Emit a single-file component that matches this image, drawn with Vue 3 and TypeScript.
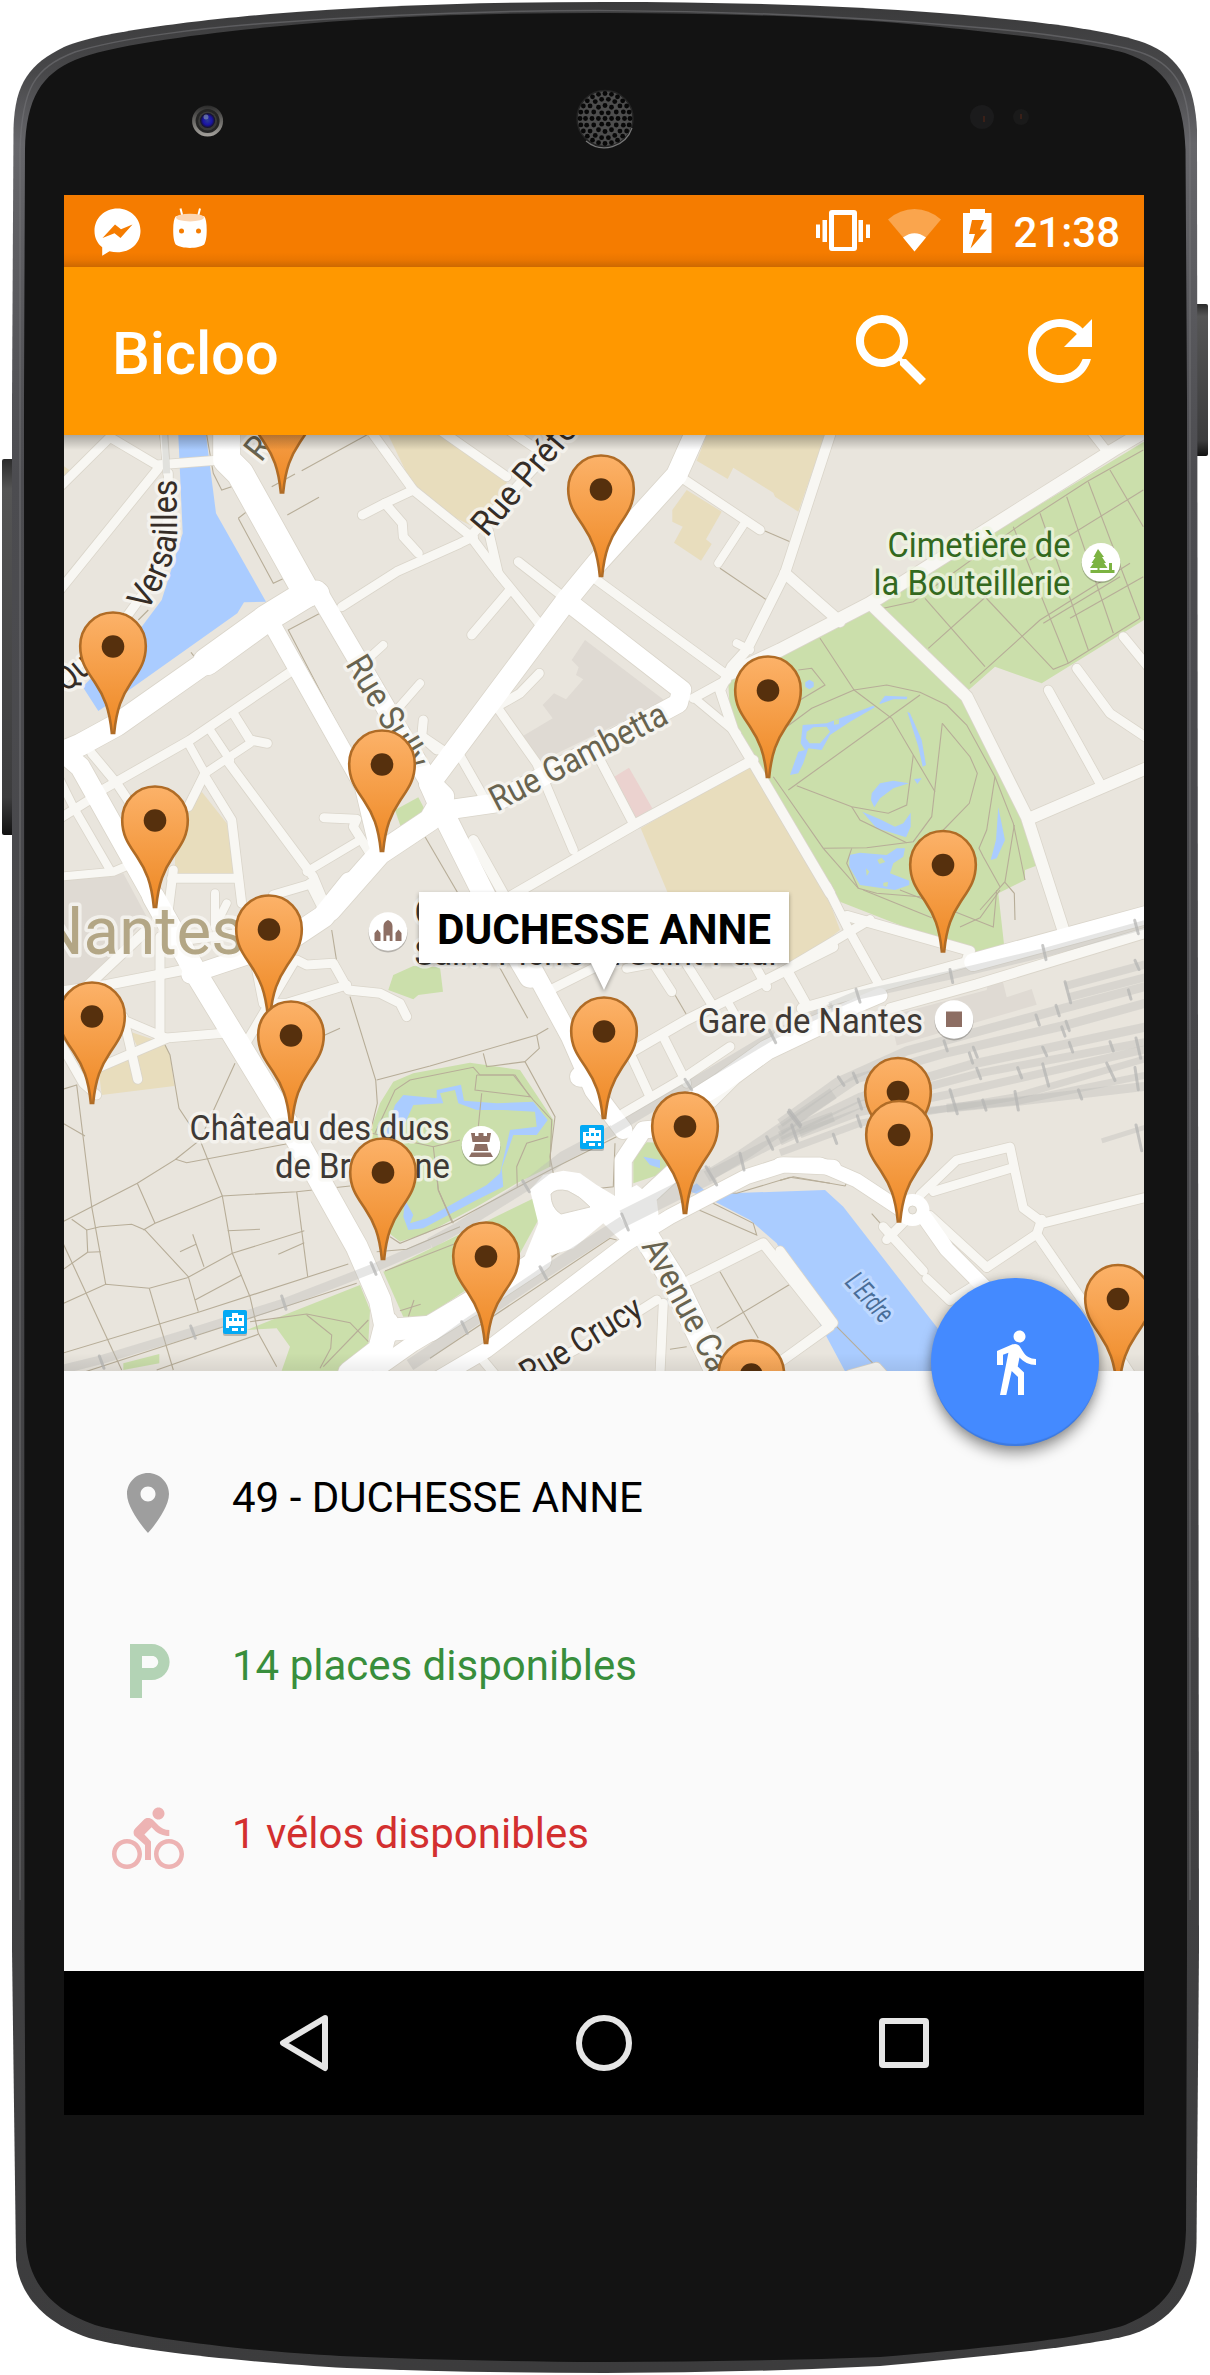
<script setup lang="ts">
type Tile = 'a' | 'b' | 'c' | 'd' | 'e' | 'f'
type Shape = [Tile, string, number?]

// Origin and vertical density of each map tile
const tiles: Record<Tile, [number, number, number]> = {
  a: [60, 430, 3],
  b: [430, 430, 3],
  c: [780, 430, 3],
  d: [60, 890, 3],
  e: [430, 890, 3],
  f: [780, 890, 2.703],
}

const project = (tile: Tile, points: string): string => {
  const [ox, oy, sy] = tiles[tile]
  return points
    .trim()
    .split(/\s+/)
    .map((p) => {
      const [x, y] = p.split(',').map(Number)
      return `${(ox + x / 3).toFixed(1)},${(oy + y / sy).toFixed(1)}`
    })
    .join(' ')
}
const build = (list: Shape[], width: number) =>
  list.map(([t, p, w]) => ({ points: project(t, p), w: w ?? width }))

const sand = build([
  ['a', '985,15 1140,15 1350,140 1260,300 1180,260 1060,170'],
  ['a', '0,100 35,125 0,165'],
  ['a', '425,1085 500,1180 525,1330 345,1332 345,1250 385,1150'],
  ['b', '830,15 1185,15 1105,245 1035,200 1030,188 910,113 893,147 800,92'],
  ['b', '770,180 875,245 828,328 845,342 813,392 732,338 758,290 727,275 727,240'],
  ['b', '632,1195 960,1005 1200,1420 1230,1500 1100,1600 760,1500'],
  ['d', '210,425 315,460 330,495 343,588 125,615 115,530 240,485'],
], 0)

const grey = build([
  ['b', '465,630 705,812 320,1000 275,920 368,865 338,825 372,790 408,808 460,748 438,735 446,712 425,690'],
  ['a', '0,1350 190,1330 260,1460 100,1650 0,1680'],
  ['f', '330,340 620,270 625,245 665,235 680,290 755,268 770,310 350,420'],
], 0)

const green = build([
  ['c', '265,530 0,675 -100,700 -155,760 -150,850 -110,930 150,1370 180,1415 575,1570 672,1543 655,1390 735,1350 735,1320 775,1305 740,1180 560,810'],
  ['c', '290,520 1092,35 1092,570 785,760 645,710 560,785'],
  ['a', '1005,1140 1075,1102 1095,1140 1022,1190'],
  ['d', '985,300 1000,255 1060,228 1140,232 1149,305 1075,315 1060,328'],
  ['d', '925,740 960,640 1000,575 1060,550 1230,518 1380,540 1480,690 1470,830 1370,880 1250,950 1100,1030 1020,1055 975,1020 1040,930 960,900'],
  ['d', '560,1320 900,1185 930,1260 925,1360 840,1442 665,1442 690,1370 650,1315'],
  ['d', '970,1145 1430,920 1440,980 1380,1090 1100,1280 1030,1280'],
  ['d', '190,1420 298,1392 298,1420 190,1440'],
  ['d', '1010,1385 1130,1340 1030,1410 970,1442'],
  ['e', '610,880 610,800 650,757 690,758 740,800 700,850'],
], 0)

const water = build([
  ['a', '355,15 438,15 468,250 618,515 552,517 532,550 200,785 115,843 68,770 245,590 305,510 368,310'],
  ['c', '30,1035 55,965 75,960 62,940 68,885 140,880 280,827 285,832 210,875 150,915 125,960 85,955 70,1000 55,1030'],
  ['c', '298,820 315,797 382,800 380,808 340,808 300,822'],
  ['c', '382,845 390,850 425,930 438,1005 428,1010 415,950'],
  ['c', '275,1090 300,1060 340,1052 387,1060 340,1075 300,1105 283,1132 273,1110'],
  ['c', '402,1047 425,1045 412,1062'],
  ['c', '247,1145 300,1168 345,1190 370,1180 392,1148 392,1190 378,1222 340,1210 290,1195'],
  ['c', '208,1275 240,1268 320,1275 350,1255 375,1255 370,1280 340,1300 330,1330 388,1352 388,1365 345,1380 240,1365 208,1310'],
  ['c', '655,1132 675,1230 650,1285 632,1290 648,1230'],
  ['c', '76,757 88,749 101,757 101,770 88,778 76,770'],
  ['d', '975,735 1005,645 1030,615 1130,625 1130,600 1203,584 1212,632 1310,640 1420,635 1463,690 1430,735 1360,735 1325,835 1330,890 1250,930 1090,1015 1045,1020 1030,980 1035,930 1060,975 1050,1000 1100,985 1280,885 1320,850 1350,720 1430,710 1425,665 1330,660 1250,660 1195,640 1185,600 1140,610 1150,640 1060,645 1035,700 1020,740'],
  ['e', '640,800 690,810 690,835 660,825'],
  ['e', '800,880 845,920 900,910 1185,900 1240,950 1620,1440 1275,1500 1040,1060 960,990 845,930 770,900'],
], 0)

// Small islands and clearings inside the ponds
const islands = build([
  ['c', '80,905 100,892 140,890 150,905 120,940 88,940 78,925'],
  ['c', '162,870 178,868 176,882 162,884'],
  ['c', '292,1290 305,1283 316,1296 298,1302'],
  ['c', '258,1315 268,1325 260,1338'],
  ['c', '310,1358 324,1356 322,1370 310,1368'],
], 0)

const buildings = build([['b', '553,1040 597,1013 667,1135 617,1165']], 0)

const minor = build([
  ['a', '-20,190 150,22 290,105 480,90'],
  ['a', '0,480 295,115'],
  ['a', '310,0 320,130', 7],
  ['a', '325,130 325,260 280,450 200,560 0,760', 9],
  ['a', '930,0 1060,180 1240,325'],
  ['a', '907,255 975,220 1060,180'],
  ['a', '975,220 1027,280 1030,320 1075,370'],
  ['a', '845,530 1010,425 1200,340 1240,320'],
  ['a', '1140,0 1340,140'],
  ['b', '120,320 420,0'],
  ['b', '235,0 310,50'],
  ['b', '130,330 205,430 335,590'],
  ['b', '175,300 205,430'],
  ['b', '240,480 125,615', 9],
  ['b', '265,395 400,500', 9],
  ['b', '500,450 890,735'],
  ['b', '1205,0 1065,430 950,660 905,710 870,780 910,900 970,1000 1200,1390', 10],
  ['f', '140,-10 210,115 300,260', 9],
  ['b', '790,805 890,750'],
  ['b', '800,810 920,910', 8],
  ['c', '15,430 180,575', 11],
  ['c', '-150,730 0,660 270,520 1000,60 1110,-5', 13],
  ['c', '270,520 560,800 740,1160 850,1500', 12],
  ['c', '750,1165 1110,1010', 12],
  ['c', '805,780 960,1060', 9],
  ['c', '890,715 990,850 1110,930', 9],
  ['c', '1030,620 1120,730', 9],
  ['c', '930,0 985,70'],
  ['b', '765,150 990,300', 9],
  ['b', '940,285 865,400', 8],
  ['b', '920,640 960,660', 8],
  ['b', '328,730 270,790 200,830'],
  ['b', '200,830 320,1000 430,1260'],
  ['b', '80,960 160,1100'],
  ['b', '970,990 620,1180 430,1290 240,1400', 10],
  ['b', '505,980 610,1180'],
  ['b', '130,1230 230,1410', 10],
  ['b', '-20,920 40,960', 8],
  ['a', '1090,870 1085,920 1130,960', 9],
  ['a', '100,1095 390,930 700,720'],
  ['a', '520,850 570,930 622,940', 9],
  ['a', '385,940 435,1030 570,940', 8],
  ['a', '450,900 510,990', 8],
  ['a', '435,1030 385,1130'],
  ['a', '435,1040 515,1170 545,1420', 9],
  ['a', '500,990 760,1340 810,1460'],
  ['a', '740,1325 900,1230', 8],
  ['a', '792,1163 890,1168 880,1190 930,1270', 9],
  ['a', '335,1345 530,1345'],
  ['a', '325,1440 340,1320'],
  ['a', '95,970 170,1060 230,1150'],
  ['a', '0,1340 160,1325 220,1300', 8],
  ['a', '0,1050 40,1130 150,1320', 8],
  ['a', '0,1165 40,1140 120,1090'],
  ['a', '640,1395 760,1360'],
  ['a', '970,645 920,690', 8],
  ['a', '1080,760 1010,840', 8],
  ['d', '0,305 140,285 420,230', 10],
  ['d', '300,140 300,440'],
  ['d', '310,445 490,430'],
  ['d', '110,535 320,445 190,390', 9],
  ['d', '190,380 233,568', 9],
  ['d', '-10,440 70,580 110,615'],
  ['d', '560,455 700,220'],
  ['d', '590,240 610,340 680,340 860,285', 9],
  ['d', '710,210 740,225 820,220 865,300 960,310 1020,340 1040,380', 9],
  ['d', '80,290 250,130', 10],
  ['d', '465,10 465,110 500,40', 8],
  ['d', '380,150 540,130'],
  ['d', '750,-20 800,80'],
  ['e', '360,300 640,160'],
  ['e', '590,235 670,220 725,305', 9],
  ['e', '765,215 850,350'],
  ['e', '580,500 770,390 1210,170', 10],
  ['e', '600,490 660,620'],
  ['e', '700,440 770,580'],
  ['e', '580,670 760,565 900,470'],
  ['e', '890,330 930,400', 8],
  ['e', '960,200 1010,290'],
  ['e', '1070,250 1130,350'],
  ['e', '850,640 920,570 1000,510', 7],
  ['f', '0,225 270,80'],
  ['f', '200,70 570,165 560,190', 10],
  ['f', '65,320 560,195', 10],
  ['f', '25,220 80,310'],
  ['f', '330,320 590,255 1100,115', 10],
  ['e', '780,1170 1000,1060 1190,1300', 10],
  ['e', '1200,1310 1060,1410'],
  ['e', '700,1240 690,1450', 9],
  ['e', '250,1480 490,1350 680,1230', 9],
  ['e', '150,1400 200,1460', 9],
  ['f', '420,825 530,730 690,695 705,760 730,860 790,900 1100,830'],
  ['f', '460,815 700,750', 9],
  ['f', '785,890 770,930 620,1020'],
  ['f', '770,930 900,1100 1060,1320'],
  ['f', '450,880 620,1020'],
  ['f', '310,910 430,1030', 9],
  ['f', '440,1050 510,1110 600,1060'],
  ['f', '0,975 160,1170 0,1275', 9],
  ['f', '320,945 380,890', 9],
  ['f', '210,1310 290,1290 330,1330', 9],
], 9)

const major = build([
  ['a', '500,-10 500,90 540,130 735,480 745,490', 27],
  ['a', '770,480 1110,1060', 19],
  ['a', '1110,1060 1150,1150 1310,1470 1410,1640', 22],
  ['e', '300,220 420,440 490,600 580,720', 18],
  ['a', '-50,990 60,945 170,885 440,695', 22],
  ['a', '440,695 620,565 745,488', 27],
  ['a', '745,488 775,490', 22],
  ['a', '640,590 910,1070 950,1240', 17],
  ['a', '0,960 60,1010 290,1420', 20],
  ['d', '280,20 420,270 700,730 890,1070 960,1230 980,1330', 22],
  ['b', '805,-10 740,135 500,400 410,510 0,1060', 21],
  ['a', '1110,1060 1150,1100 1110,1170 960,1270 810,1440', 22],
  ['d', '870,-20 790,80 700,140', 22],
  ['d', '660,165 390,255', 17],
  ['b', '420,520 755,780 745,820 300,1060 190,1120 50,1140 -20,1180', 19],
  ['d', '980,1320 1110,1310 1260,1220', 22],
  ['d', '980,1300 960,1380 870,1450', 24],
  ['d', '960,1430 1060,1360 1110,1330', 16],
  ['e', '0,1320 170,1215 330,1110', 23],
  ['e', '0,1480 170,1380 590,1060 720,980 950,860 1060,825 1210,832', 15],
  ['f', '0,742 120,742 230,785 390,880', 14],
  ['f', '430,880 500,970 620,1080 720,1180', 15],
  ['e', '630,1010 730,1170 870,1460', 25],
  ['e', '760,650 870,580 1010,480 1210,385', 20],
  ['f', '0,400 300,285', 15],
  ['f', '580,195 1110,65', 18],
  ['e', '580,950 580,810 640,720 740,710', 17],
  ['e', '640,930 770,810 830,680', 18],
  ['e', '450,560 470,560', 20],
], 20)

const blobs = build([
  ['e', '300,900 340,855 400,842 450,850 500,885 555,918 570,910 620,885 680,930 690,1010 600,1080 520,1000 430,1075 350,1100 280,1110 325,1000'],
], 0)

const footpaths = build([
  ['a', '535,265 570,237 682,440 640,460 535,265'],
  ['a', '440,15 460,130 485,180 530,165'],
  ['a', '635,170 705,132'],
  ['a', '725,122 920,15'], ['a', '682,255 777,202'],
  ['a', '780,550 685,600 945,1100'], ['a', '905,1155 950,1240'],
  ['a', '1095,1220 1200,1400'],
  ['a', '300,15 325,260'], ['a', '235,570 265,540'], ['a', '393,667 407,685'],
  ['b', '1005,303 1080,335'], ['b', '870,415 1010,510'],
  ['c', '120,625 222,780 95,835 20,890'],
  ['c', '222,780 320,765 420,787 500,825 560,885 645,1040 700,1180 735,1350'],
  ['c', '222,780 335,865 400,975 465,1085'], ['c', '420,795 25,1080'],
  ['c', '-20,1040 130,1255 235,1375 290,1390 420,1400'],
  ['c', '50,1067 215,1130 325,1150 380,1125 400,975'],
  ['c', '215,1130 240,1170 380,1238'], ['c', '130,1255 260,1253 400,1235 455,1160 487,880'],
  ['c', '487,880 570,980 592,1030 568,1120 490,1200'],
  ['c', '645,1040 620,1200 597,1255 610,1280 660,1370'],
  ['c', '703,1185 675,1355 600,1440'], ['c', '675,1357 703,1390 705,1470'],
  ['c', '55,720 95,715 135,765 60,810'],
  ['c', '215,1255 200,1300 235,1375'],
  ['f', '250,0 455,75'], ['f', '360,0 640,100 650,0'], ['f', '540,100 600,75 660,0'],
  ['c', '310,535 400,515 720,285 920,155 1090,60'],
  ['c', '435,505 615,710'], ['c', '445,655 640,480'], ['c', '610,495 820,718 865,700 1080,565'],
  ['c', '570,760 780,570 1050,400'], ['c', '700,290 865,700'], ['c', '780,250 925,660'],
  ['c', '860,200 1000,610'], ['c', '925,155 1080,565'], ['c', '990,120 1090,290'],
  ['c', '750,390 1090,180'], ['c', '790,580 1020,440'], ['c', '870,565 1090,440'],
  ['e', '205,225 293,385'], ['e', '735,315 770,375'],
  ['d', '815,120 830,215'], ['d', '870,320 947,570 952,640 930,730'],
  ['d', '525,520 420,750 347,808'], ['d', '795,435 840,415'],
  ['d', '315,465 330,495 357,655 420,750 487,918 517,1090 570,1220 595,1330 650,1430'],
  ['d', '0,600 50,585 95,950 137,1183'], ['d', '0,695 75,738'],
  ['d', '0,1000 95,950 232,880 347,808 380,818 690,760'],
  ['d', '35,988 80,1020 120,1010 215,1003 255,1020 385,1160 415,1265'],
  ['d', '80,1020 83,1087 122,1085'], ['d', '83,1087 0,1145'],
  ['d', '232,880 285,1000 487,918 710,905 870,888'], ['d', '285,1000 250,1020'],
  ['d', '710,905 743,1160'], ['d', '503,1022 600,1018'],
  ['d', '398,1033 432,1130'], ['d', '360,1085 408,1063'],
  ['d', '382,1163 517,1090 733,1022'], ['d', '655,1093 733,1058'], ['d', '405,1230 545,1155'],
  ['d', '0,1245 137,1183 268,1195 382,1163'], ['d', '0,1040 185,1440'], ['d', '268,1195 340,1440'],
  ['d', '0,1392 420,1265 865,1122'], ['d', '0,1470 230,1395 890,1180'],
  ['d', '290,1440 595,1333'], ['d', '570,1295 740,1272 870,1298 925,1355'],
  ['d', '740,1275 815,1335 812,1375 780,1435'], ['d', '925,1290 790,1430'],
  ['d', '1020,1262 1082,1243'], ['d', '1062,1230 1045,1280'],
  ['d', '950,570 1110,528 1430,435 1465,415'],
  ['d', '945,730 1005,600 1050,570 1240,532 1260,555 1360,555 1420,630 1475,690 1470,830'],
  ['d', '935,730 1120,770 1200,750'], ['d', '1120,770 1135,900 1175,995'],
  ['d', '990,1040 1020,1060 1180,995 1470,840 1680,735'],
  ['d', '950,1085 1040,1078 1200,1010'], ['d', '975,1143 1200,1055'],
  ['e', '160,490 170,530 285,515 375,680 360,800 370,850'],
  ['e', '140,555 135,600 300,620 255,555 140,555'], ['e', '155,610 145,710'],
  ['e', '355,740 290,760 260,830 262,890'], ['e', '320,435 328,475 285,515'],
  ['e', '20,850 25,900 70,1000'], ['e', '510,895 550,890 555,760'],
  ['e', '0,1405 540,1045 560,1050'], ['e', '0,1350 500,1010'],
  ['e', '845,905 920,910 1080,862 1200,880'], ['e', '795,955 980,1035 970,1000 840,935'],
  ['e', '870,1145 985,1345'], ['e', '860,1315 1085,1180 1060,1135'], ['e', '720,1378 770,1370'],
  ['f', '0,785 40,775 195,800 205,785'], ['f', '275,875 310,910'], ['f', '170,1180 290,1290'],
], 1)

const rails = build([
  ['d', '0,1440 120,1410 400,1325 670,1240 940,1135 1110,1060', 9],
  ['e', '0,1060 90,1010 290,885 400,800 550,720', 11],
  ['e', '550,720 770,590 1030,435 1210,350', 9],
  ['f', '150,315 230,285 510,230 790,170 1110,90', 9],
  ['a', '315,0 320,130', 7],
  ['e', '-60,1425 0,1385 110,1305 340,1150 580,995', 12],
  ['e', '580,985 850,850', 17],
  ['e', '830,860 930,800 1210,610', 12],
  ['e', '850,850 1100,720 1210,680', 10],
  ['f', '0,630 170,520 380,435 850,320 1100,260', 9],
  ['f', '0,650 230,510 500,440 860,365 1100,305', 9],
  ['f', '0,665 240,560 580,470 1100,370', 9],
  ['f', '0,680 240,580 600,495 1100,410', 8],
  ['f', '60,660 240,600 520,550 1100,430', 8],
  ['f', '0,710 240,630 700,560 1100,455', 7],
  ['f', '400,600 720,570 1100,500', 7],
  ['f', '500,590 720,570 1100,530', 9],
  ['f', '855,260 1100,200', 8], ['f', '865,290 1100,235', 8],
  ['f', '965,678 1100,640', 5],
], 8)

const ticks = build([
  ['d', '118,1398 132,1435'], ['d', '392,1308 406,1345'], ['d', '665,1218 678,1258'], ['d', '933,1118 948,1153'],
  ['e', '278,872 298,905'], ['e', '330,1130 350,1168'], ['e', '575,972 595,1020'], ['e', '95,1295 112,1330'],
  ['e', '1018,420 1037,458'], ['e', '765,568 785,600'], ['e', '828,830 860,885'], ['e', '1010,740 1028,778'],
  ['e', '1078,660 1112,705'], ['e', '930,790 942,840'],
  ['f', '228,268 240,303'], ['f', '510,215 518,250'], ['f', '788,150 798,188'], ['f', '1064,82 1075,118'],
  ['f', '855,248 872,305'], ['f', '1045,270 1053,295'], ['f', '768,338 778,365'], ['f', '828,312 838,340'],
  ['f', '845,370 855,395'], ['f', '858,355 868,380'], ['f', '492,408 502,435'], ['f', '568,440 578,468'], ['f', '580,425 592,452'],
  ['f', '788,425 800,448'], ['f', '868,412 878,438'], ['f', '990,410 1000,435'], ['f', '590,482 602,510'], ['f', '713,480 725,508'],
  ['f', '788,470 806,530'], ['f', '980,468 1005,515'], ['f', '510,540 532,605'], ['f', '608,568 618,595'], ['f', '705,545 715,595'],
  ['f', '895,540 905,565'], ['f', '1068,400 1082,455'], ['f', '1065,190 1077,215'], ['f', '1065,480 1075,540'],
  ['f', '175,505 192,528'], ['f', '220,495 232,520'], ['f', '25,600 60,640'], ['f', '235,565 245,592'], ['f', '160,660 170,685'],
  ['f', '1068,635 1085,705'], ['f', '232,610 243,640'], ['f', '35,635 52,680'],
], 3)

// Tip position of each station marker
const pins: [number, number][] = [
  [282, 493.5], [601, 577], [113, 734], [768, 778], [382, 852], [155, 908], [943, 952.5],
  [269, 1017], [92, 1104], [604, 1119], [291, 1123], [898, 1179.5], [685, 1214], [899, 1222.5],
  [383, 1260], [486, 1344], [1118, 1386.5], [751.3, 1462],
]

interface Label {
  text: string
  x: number
  y: number
  len: number
  rot?: number
  kind: string
}
const labels: Label[] = [
  { text: 'Nantes', x: 37, y: 954, len: 208, kind: 'city' },
  { text: 'Cimetière de', x: 887.5, y: 556.7, len: 183, kind: 'park' },
  { text: 'la Bouteillerie', x: 873.5, y: 595, len: 197, kind: 'park' },
  { text: 'Cathédrale', x: 414.5, y: 924, len: 160, kind: 'poi' },
  { text: 'Saint-Pierre et Saint-Paul', x: 414.5, y: 965, len: 362, kind: 'poi' },
  { text: 'Château des ducs', x: 189.5, y: 1139.5, len: 260, kind: 'poi' },
  { text: 'de Bretagne', x: 275, y: 1178.3, len: 175, kind: 'poi' },
  { text: 'Gare de Nantes', x: 698, y: 1032.7, len: 225, kind: 'poi' },
  { text: 'Rue Préfe', x: 487, y: 538, len: 141, rot: -49.5, kind: 'dark' },
  { text: 'R', x: 261, y: 463, len: 20, rot: -52, kind: 'street' },
  { text: 'Qu', x: 66, y: 693, len: 37, rot: -40, kind: 'dark' },
  { text: 'Rue Sully', x: 345, y: 664, len: 126, rot: 59, kind: 'street' },
  { text: 'Rue Gambetta', x: 497, y: 812, len: 195, rot: -27.4, kind: 'street' },
  { text: 'Rue Crucy', x: 529, y: 1386, len: 136, rot: -31.5, kind: 'dark' },
  { text: 'Avenue Ca', x: 641, y: 1246, len: 146, rot: 61.5, kind: 'street' },
  { text: "L'Erdre", x: 844, y: 1283, len: 56, rot: 48, kind: 'river' },
]

const holes: [number, number][] = []
for (const [ring, count] of [[0, 1], [6.6, 6], [13, 12], [19.5, 18], [25, 24]]) {
  for (let i = 0; i < count; i++) {
    const t = (i / count) * Math.PI * 2
    holes.push([605 + ring * Math.cos(t), 118.5 + ring * Math.sin(t)])
  }
}

const rows = [
  { tone: 'place', text: '49 - DUCHESSE ANNE', icon: 'M12 2C8.13 2 5 5.13 5 9c0 5.25 7 13 7 13s7-7.75 7-13c0-3.87-3.13-7-7-7zm0 9.500c-1.380 0-2.500-1.120-2.500-2.500s1.120-2.500 2.500-2.500 2.500 1.120 2.500 2.500-1.120 2.500-2.500 2.500z' },
  { tone: 'parking', text: '14 places disponibles', icon: 'M13.200 3H6v18h4v-6h3.200c3.310 0 6-2.690 6-6s-2.690-6-6-6zm.2 8H10V7h3.400c1.100 0 2 .9 2 2s-.9 2-2 2z' },
  { tone: 'bikes', text: '1 vélos disponibles', icon: 'M15.500 5.500c1.100 0 2-.9 2-2s-.9-2-2-2-2 .9-2 2 .9 2 2 2zM5 12c-2.800 0-5 2.200-5 5s2.200 5 5 5 5-2.200 5-5-2.200-5-5-5zm0 8.500c-1.900 0-3.500-1.600-3.500-3.500s1.600-3.500 3.500-3.500 3.500 1.600 3.500 3.500-1.600 3.500-3.500 3.500zm5.800-10l2.400-2.400.8.8c1.300 1.300 3 2.100 5.100 2.100V9c-1.500 0-2.700-.6-3.600-1.500l-1.900-1.900c-.5-.4-1-.6-1.600-.6s-1.100.2-1.400.6L7.800 8.400c-.4.4-.6.9-.6 1.400 0 .6.2 1.100.6 1.400L11 14v5h2v-6.200l-2.200-2.300zM19 12c-2.800 0-5 2.200-5 5s2.200 5 5 5 5-2.200 5-5-2.200-5-5-5zm0 8.500c-1.900 0-3.500-1.600-3.500-3.500s1.600-3.500 3.500-3.500 3.500 1.600 3.500 3.500-1.600 3.500-3.500 3.500z' },
]
</script>

<template>
  <div class="phone">
    <svg class="shell" viewBox="0 0 1210 2375" width="1210" height="2375">
      <defs>
        <linearGradient id="edge" x1="0" y1="0" x2="0" y2="1">
          <stop offset="0" stop-color="#3a3a3b" /><stop offset=".03" stop-color="#48484a" />
          <stop offset=".06" stop-color="#66666a" /><stop offset=".2" stop-color="#4c4c50" /><stop offset="1" stop-color="#3c3c3d" />
        </linearGradient>
        <linearGradient id="lens" x1="0" y1="0" x2="0" y2="1">
          <stop offset="0" stop-color="#2b2b2b" /><stop offset="1" stop-color="#a5a29d" />
        </linearGradient>
        <linearGradient id="side" x1="0" y1="0" x2="0" y2="1">
          <stop offset="0" stop-color="#2b2b2b" /><stop offset=".08" stop-color="#555" /><stop offset=".9" stop-color="#3c3c3d" /><stop offset="1" stop-color="#111" />
        </linearGradient>
        <radialGradient id="iris"><stop offset="0" stop-color="#2b3b93" /><stop offset=".6" stop-color="#1a13a5" /><stop offset="1" stop-color="#15131c" /></radialGradient>
      </defs>
      <rect x="2" y="459" width="14" height="376" rx="2" fill="url(#side)" />
      <rect x="1194" y="304" width="14" height="152" rx="2" fill="url(#side)" />
      <path fill="url(#edge)" d="M12 400 L13.500 128 C15 82 30 64 64 47 C96 32 200 20 270 14 C380 5 490 2 605 2 C720 2 840 5 940 13 C1010 19 1100 27 1145 43 C1180 56 1195 85 1197 130 L1199 1950 L1196.500 2243 C1195 2292 1172 2322 1130 2335 C1090 2346 970 2358 880 2366 Q740 2373 605 2373 Q470 2373 347 2368 C260 2363 140 2352 89 2338 C40 2322 18 2290 16 2260 L12 1950Z" />
      <path fill="none" stroke="#77777a" stroke-width="1.500" opacity=".55" d="M20 1900 V150 C22 88 34 68 75 52 C120 38 200 28 270 23 C500 6 720 6 960 26 C1040 32 1120 44 1145 54 C1180 68 1189 95 1190 140 V1900" />
      <path fill="#131313" d="M24 400 L25 150 C26 98 42 74 75 60 C110 45 200 34 270 27 C380 16 490 13 605 13 C720 13 840 17 930 26 C1000 33 1090 43 1125 53 C1165 66 1184 95 1185.500 150 L1187 400 V1950 L1186 2230 C1184 2285 1165 2308 1125 2325 C1080 2340 960 2350 880 2357 Q740 2362 605 2362 Q450 2361 340 2356 C260 2352 150 2340 95 2325 C45 2308 27 2275 26 2240 L24.500 1950Z" />
      <circle cx="207.600" cy="121" r="15.500" fill="url(#lens)" />
      <circle cx="207.600" cy="121" r="12" fill="#242424" /><circle cx="207.600" cy="121" r="9.500" fill="#393939" />
      <circle cx="207.600" cy="120.500" r="7.500" fill="url(#iris)" /><circle cx="206" cy="117" r="2.500" fill="#8aa0b0" opacity=".6" />
      <circle cx="605" cy="118.500" r="28" fill="#4d4d4d" stroke="#242424" stroke-width="1.500" />
      <path d="M586 141 A29 29 0 0 0 632 128" fill="none" stroke="#777" stroke-width="1.200" />
      <circle v-for="(h, i) in holes" :key="i" :cx="h[0]" :cy="h[1]" r="2.400" fill="#080808" />
      <circle cx="982" cy="117" r="12" fill="#1b1b1c" /><circle cx="1021" cy="117" r="8" fill="#1a1a1a" />
      <path d="M984 116v6M1021 114v5" stroke="#3a2018" stroke-width="2" />
    </svg>

    <main class="screen">
      <header class="status">
        <svg class="messenger" viewBox="92 195 52 72" width="52" height="72">
          <path fill="#fff" d="M117.500 208.500c-13 0-23 9.700-23 22.500 0 7 3 12.500 7.700 16.300v8.500l7.300-4.500c2.500.7 5.200 1 8 1 13 0 23-9 23-21.500s-10-22.300-23-22.300z" />
          <path fill="#f57c00" d="M102.500 238l12.500-13.500 6 4.700 11.500-4.700-12 13.500-6-4.700z" />
        </svg>
        <svg viewBox="170 195 40 72" width="40" height="72">
          <path stroke="#fff" stroke-width="2" d="M180.500 208.500l2 8M200 208.500l-2 8" />
          <path fill="#fff" d="M176 216q14 6 28 0q2.700 3 2.700 14c0 7-.7 11-2.500 14.500-6 4.500-22.500 4.500-28.500 0-1.800-3.500-2.500-7.500-2.500-14.500q0-11 2.800-14z" />
          <ellipse cx="190" cy="217.600" rx="14" ry="3.900" fill="#fcd6b3" />
          <circle cx="181.500" cy="231" r="2.500" fill="#f57c00" /><circle cx="198.500" cy="231" r="2.500" fill="#f57c00" />
        </svg>
        <div class="grow" />
        <svg viewBox="814 195 58 72" width="58" height="72">
          <path fill="#fff" fill-rule="evenodd" d="M832 210h22q3 0 3 3v35q0 3-3 3h-22q-3 0-3-3v-35q0-3 3-3zm2 5v32h18v-32z" />
          <path fill="#fff" d="M822.500 220h4.500v22h-4.500zM816 224.500h4v13.500h-4zM858.500 220h4.500v22h-4.500zM866 224.500h4v13.500h-4z" />
        </svg>
        <svg class="wifi" viewBox="886 195 58 72" width="58" height="72">
          <path fill="#faa54d" d="M888 219.500q12-10.500 26.500-10.500t26.500 10.500L914.500 251z" />
          <path fill="#fff" d="M903 237.500q11.500-8.500 23 0L914.500 251.500z" />
        </svg>
        <svg class="battery" viewBox="962 195 32 72" width="32" height="72">
          <path fill="#fff" fill-rule="evenodd" d="M970 209h15v4h6.500v40H963v-40h7zM972 220l-3 14h6l-4.500 14.500L987 229.500h-7l4-9.500z" />
        </svg>
        <span class="clock">21:38</span>
      </header>

      <header class="toolbar">
        <h1>Bicloo</h1>
        <svg viewBox="0 0 24 24" width="96" height="96"><path fill="#fff" d="M15.500 14h-.79l-.28-.27C15.410 12.590 16 11.110 16 9.500 16 5.910 13.090 3 9.500 3S3 5.910 3 9.500 5.910 16 9.500 16c1.610 0 3.090-.59 4.230-1.570l.27.28v.79l5 4.990L20.490 19l-4.990-5zm-6 0C7.010 14 5 11.990 5 9.500S7.010 5 9.500 5 14 7.010 14 9.500 11.990 14 9.500 14z" /></svg>
        <svg viewBox="0 0 24 24" width="96" height="96"><path fill="#fff" d="M17.650 6.350C16.200 4.900 14.210 4 12 4c-4.420 0-7.990 3.580-7.990 8s3.570 8 7.990 8c3.730 0 6.840-2.550 7.730-6h-2.080c-.82 2.330-3.040 4-5.650 4-3.310 0-6-2.690-6-6s2.690-6 6-6c1.660 0 3.140.69 4.220 1.780L13 11h7V4l-2.350 2.350z" /></svg>
      </header>

      <section class="map">
        <svg viewBox="64 435 1080 936" width="1080" height="936">
          <defs>
            <linearGradient id="pin" x1="0" y1="0" x2="0" y2="1"><stop offset="0" stop-color="#fcb269" /><stop offset="1" stop-color="#ee8823" /></linearGradient>
            <linearGradient id="top" x1="0" y1="0" x2="0" y2="1"><stop offset="0" stop-opacity=".27" /><stop offset="1" stop-opacity="0" /></linearGradient>
            <linearGradient id="bottom" x1="0" y1="0" x2="0" y2="1"><stop offset="0" stop-opacity="0" /><stop offset="1" stop-opacity=".07" /></linearGradient>
            <g id="marker">
              <path d="M0 -121.500C-18.500 -121.500 -32.800 -106.500 -32.800 -88C-32.800 -71 -25 -62 -17.500 -50.500C-9 -38 -3.500 -25 -1.200 -1H1.200C3.500 -25 9 -38 17.500 -50.500C25 -62 32.800 -71 32.800 -88C32.800 -106.500 18.500 -121.500 0 -121.500Z" fill="url(#pin)" stroke="#b06c26" stroke-width="2.600" />
              <circle cy="-87.500" r="11.300" fill="#56300d" />
            </g>
            <g id="transit">
              <rect y="2" width="24" height="24" rx="2" fill="#000" opacity=".2" /><rect width="24" height="24" rx="2" fill="#03a9f4" />
              <path fill="#fff" fill-rule="evenodd" d="M9 3h6v2h6v11H6v2H3V7h6zM6 8v3h3V8zm5 0v3h3V8zm5 0v3h3V8zM9 18h6v3H9zm9 0h3v3h-3z" />
            </g>
            <path id="versailles" d="M146.500 612Q176.500 566 177.300 530V470" />
          </defs>
          <rect x="64" y="435" width="1080" height="936" fill="#e9e5dd" />
          <polygon v-for="(s, i) in grey" :key="'g' + i" :points="s.points" fill="#dfdad3" />
          <polygon v-for="(s, i) in sand" :key="'s' + i" :points="s.points" fill="#e8ddbd" />
          <polygon v-for="(s, i) in green" :key="'v' + i" :points="s.points" fill="#cbdfab" />
          <polygon v-for="(s, i) in water" :key="'w' + i" :points="s.points" fill="#aaccff" />
          <polygon v-for="(s, i) in islands" :key="'i' + i" :points="s.points" fill="#cbdfab" />
          <polygon v-for="(s, i) in buildings" :key="'b' + i" :points="s.points" fill="#ebd2cf" />
          <g fill="none" stroke="#b7ad98" stroke-width="1.100"><polyline v-for="(s, i) in footpaths" :key="i" :points="s.points" /></g>
          <g class="lines" stroke="#dad5ca">
            <polyline v-for="(s, i) in minor" :key="'m' + i" :points="s.points" :stroke-width="s.w + 1.600" />
            <polyline v-for="(s, i) in major" :key="'M' + i" :points="s.points" :stroke-width="s.w + 1.600" />
          </g>
          <g class="lines" stroke="#f8f7f3"><polyline v-for="(s, i) in minor" :key="i" :points="s.points" :stroke-width="s.w" /></g>
          <g class="lines" stroke="#fff"><polyline v-for="(s, i) in major" :key="i" :points="s.points" :stroke-width="s.w" /></g>
          <polygon v-for="(s, i) in blobs" :key="'o' + i" :points="s.points" fill="#fff" />
          <path fill="#e9e5dd" stroke="#dad5ca" d="M551 1194Q556 1188 568 1191Q580 1196 590 1207L561 1214Q551 1208 551 1194Z" />
          <ellipse cx="912.500" cy="1210" rx="17" ry="16" fill="#fff" /><circle cx="912.500" cy="1210" r="4" fill="#e9e5dd" stroke="#dad5ca" />
          <g class="rails" stroke="#b9b9b6" stroke-opacity=".36"><polyline v-for="(s, i) in rails" :key="i" :points="s.points" :stroke-width="s.w" /></g>
          <g class="lines" stroke="#b5b5b4" stroke-opacity=".75"><polyline v-for="(s, i) in ticks" :key="i" :points="s.points" :stroke-width="s.w" /></g>

          <g class="labels">
            <text v-for="l in labels" :key="l.text" :class="l.kind" :textLength="l.len" lengthAdjust="spacingAndGlyphs" :transform="`translate(${l.x} ${l.y}) rotate(${l.rot ?? 0})`">{{ l.text }}</text>
            <text class="dark" textLength="139" lengthAdjust="spacingAndGlyphs"><textPath href="#versailles" textLength="139" lengthAdjust="spacingAndGlyphs">Versailles</textPath></text>
          </g>

          <g v-for="(c, i) in [[1101, 562.300], [388, 931.500], [481, 1145.300], [954, 1019.500]]" :key="i">
            <circle :cx="c[0]" :cy="c[1] + 1.500" r="19.500" fill="#000" opacity=".22" /><circle :cx="c[0]" :cy="c[1]" r="19.300" fill="#fff" />
          </g>
          <path fill="#7cb342" d="M1098 549l6 8h-2l4 6h-2l3.500 5h-8v2h9.500v-7h3v7h2.500v3h-24v-3h7v-2h-7.500l3.500-5h-2l4-6h-2z" />
          <path fill="#8d6e63" d="M374.500 941v-8l3-3.500 3 3.500v8zM383.500 941v-15c0-3 2-5 4.500-6 2.500 1 4.500 3 4.500 6v15h-2.800v-5.500h-3.400v5.500zM395.500 941v-8l3-3.500 3 3.500v8z" />
          <path fill="#8d6e63" d="M471 1133h4v3h3.500v-3h5v3h3.500v-3h4l-1.500 9h-17zM475 1144h12l1.500 7h-15zM471.500 1152.500h19l2.500 4.500h-24z" />
          <rect x="946" y="1011.500" width="16" height="15.500" fill="#8d6e63" />
          <use href="#transit" x="223" y="1310" /><use href="#transit" x="580" y="1125" />
          <use v-for="(p, i) in pins" :key="i" href="#marker" :x="p[0]" :y="p[1]" />
          <g class="callout"><path fill="#fff" d="M419 892H789V963H617L604 990L591 963H419Z" /></g>
          <text class="callout-text" x="437" y="944" textLength="334" lengthAdjust="spacingAndGlyphs">DUCHESSE ANNE</text>
          <rect x="64" y="435" width="1080" height="15" fill="url(#top)" />
          <rect x="64" y="1353" width="1080" height="18" fill="url(#bottom)" />
        </svg>
      </section>

      <section class="details">
        <button class="fab"><svg viewBox="0 0 24 24" width="72" height="72"><path fill="#fff" d="M13.500 5.500c1.100 0 2-.9 2-2s-.9-2-2-2-2 .9-2 2 .9 2 2 2zM9.800 8.900L7 23h2.100l1.800-8 2.100 2v6h2v-7.500l-2.100-2 .6-3C14.800 12 16.800 13 19 13v-2c-1.900 0-3.500-1-4.300-2.400l-1-1.600c-.4-.6-1-1-1.700-1-.3 0-.5.1-.8.1L6 8.300V13h2V9.600l1.800-.7" /></svg></button>
        <div v-for="r in rows" :key="r.tone" class="row" :class="r.tone">
          <svg viewBox="0 0 24 24" width="72" height="72"><path :d="r.icon" /></svg>
          <span>{{ r.text }}</span>
        </div>
      </section>

      <nav class="nav">
        <svg viewBox="0 0 60 60" width="60" height="60"><path d="M51 5L9 30L51 55Z" /></svg>
        <svg viewBox="0 0 60 60" width="60" height="60"><circle cx="30" cy="30" r="25" /></svg>
        <svg viewBox="0 0 60 60" width="60" height="60"><rect x="8" y="8" width="44" height="44" rx="1" /></svg>
      </nav>
    </main>
  </div>
</template>

<style>
body { margin: 0; background: #fff; }
</style>

<style scoped>
.phone { position: relative; box-sizing: border-box; width: 1210px; height: 2375px; padding: 195px 66px 260px 64px; font-family: Roboto, sans-serif; overflow: hidden; }
.shell { position: absolute; inset: 0; }
.screen { position: relative; width: 1080px; height: 1920px; display: flex; flex-direction: column; }
svg { display: block; flex: none; }
.status { display: flex; height: 72px; box-sizing: border-box; padding: 0 24px 0 28px; background: linear-gradient(#f57c00 80%, #ea7600 90%, #cd6800); color: #fff; }
.messenger { margin-right: 26px; }
.grow { flex: 1; }
.wifi { margin: 0 18px 0 14px; }
.clock { margin-left: 19px; font-size: 42px; font-weight: 500; line-height: 75px; }
.toolbar { display: flex; align-items: center; height: 168px; box-sizing: border-box; padding: 0 36px 0 48px; background: #ff9800; color: #fff; gap: 72px; }
h1 { flex: 1; margin: 0; padding-top: 6px; font-size: 60px; font-weight: 500; line-height: 72px; letter-spacing: -0.2px; }
.map { height: 936px; overflow: hidden; }
.lines { fill: none; stroke-linecap: round; stroke-linejoin: round; }
.rails { fill: none; stroke-linejoin: round; }
.labels text { font-size: 35px; paint-order: stroke; stroke: rgba(248, 247, 243, 0.75); stroke-width: 7px; stroke-linejoin: round; }
.labels .park { fill: #33691e; stroke: rgba(240, 246, 228, 0.75); }
.labels .poi { fill: #3e3935; }
.labels .dark { fill: #352d27; }
.labels .street { fill: #68634f; }
.labels .city { font-size: 67px; fill: #b3a685; }
.labels .river { font-size: 28px; font-style: italic; fill: #496d98; stroke: rgba(196, 220, 255, 0.8); }
.callout { filter: drop-shadow(0 2px 2px rgba(0, 0, 0, 0.35)); }
.callout-text { font-size: 42px; font-weight: 700; fill: #000; }
.details { position: relative; height: 600px; box-sizing: border-box; padding: 48px; background: #fafafa; }
.fab { position: absolute; top: -93px; right: 45px; width: 168px; height: 168px; border: 0; border-radius: 50%; padding: 0; display: flex; align-items: center; justify-content: center; background: #448aff; box-shadow: 0 8px 14px rgba(0, 0, 0, 0.36), 0 0 8px rgba(0, 0, 0, 0.18), inset 0 -3px 1px -1px rgba(0, 0, 0, 0.12); }
.row { display: flex; align-items: center; height: 168px; gap: 48px; font-size: 42px; color: #000; }
.row span { line-height: 50px; padding-bottom: 10px; }
.place svg { fill: #9e9e9e; }
.parking { color: #388e3c; }
.parking svg { fill: #b3d3b5; }
.bikes { color: #d32f2f; }
.bikes svg { fill: #edb3b3; }
.nav { display: flex; align-items: center; justify-content: center; height: 144px; gap: 240px; background: #000; }
.nav svg { fill: none; stroke: #e6e6e6; stroke-width: 6; stroke-linejoin: round; }
</style>
